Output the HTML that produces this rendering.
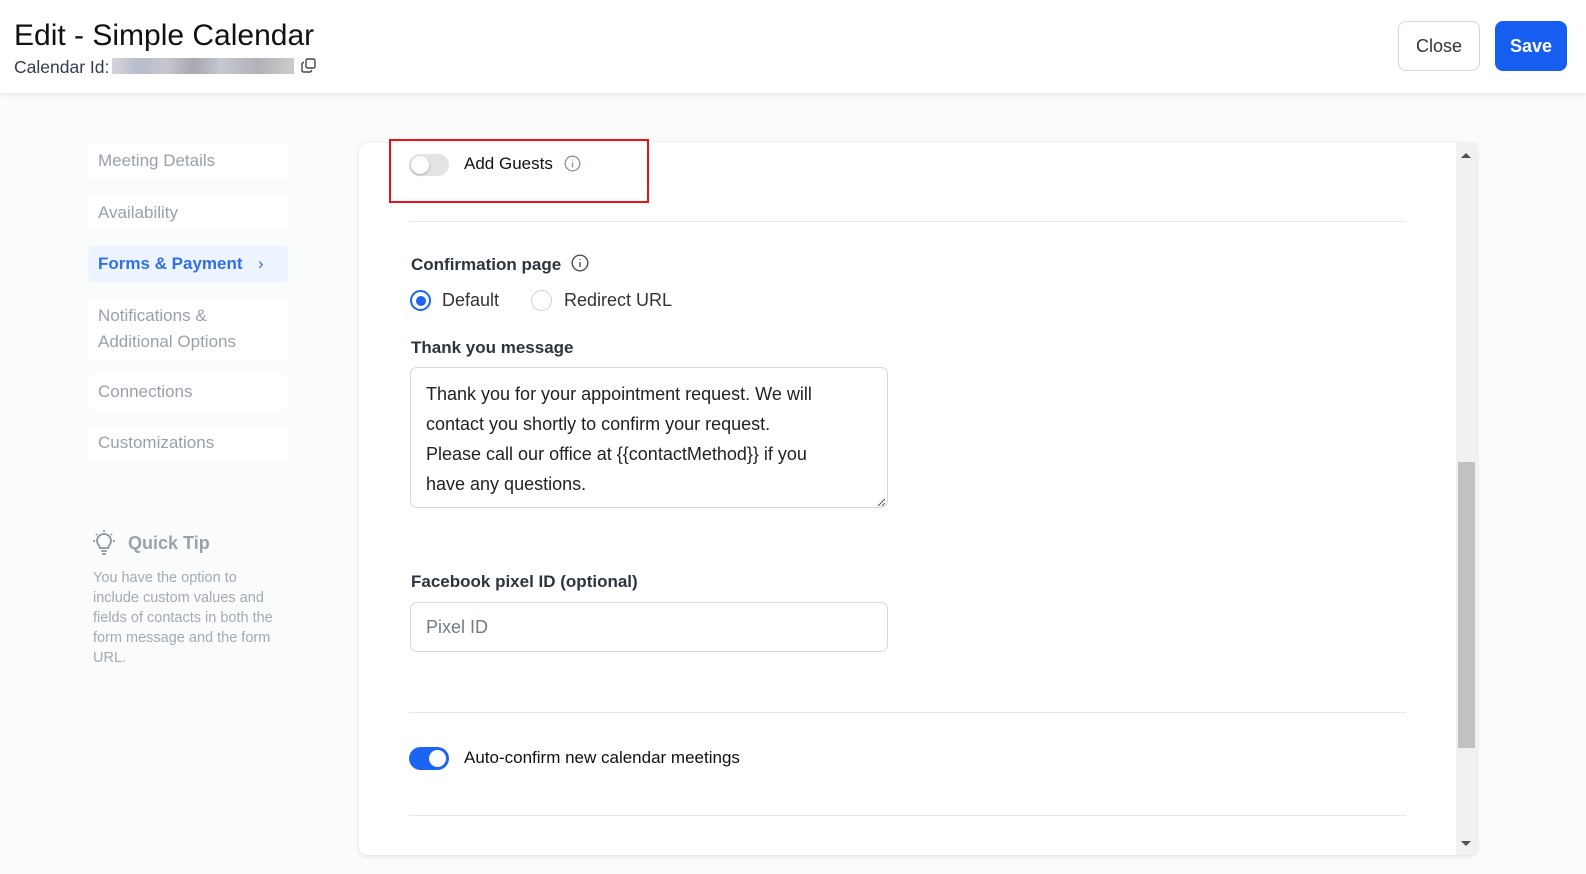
<!DOCTYPE html>
<html><head><meta charset="utf-8"><style>
*{box-sizing:border-box;margin:0;padding:0}
body{width:1586px;height:874px;background:#fafbfb;font-family:"Liberation Sans",sans-serif;position:relative;overflow:hidden;color:#111}
.a{position:absolute;white-space:nowrap}
.hdr{position:absolute;left:0;top:0;width:1586px;height:93px;background:#fff;box-shadow:0 2px 4px rgba(0,0,0,.08)}
.nav{position:absolute;left:88px;width:200px;background:#fff;border-radius:5px;color:#98a0ad;font-size:17px;padding-left:10px;display:flex;align-items:center}
.card{position:absolute;left:359px;top:143px;width:1118px;height:712px;background:#fff;border-radius:8px;box-shadow:0 1px 4px rgba(0,0,0,.12)}
.div{position:absolute;left:409px;width:997px;height:1px;background:#e8e8e8}
.lbl{font-size:17px;font-weight:bold;color:#2c3440}
</style></head><body>
<div class="hdr">
 <div class="a" style="left:14px;top:19px;font-size:30px;color:#111">Edit - Simple Calendar</div>
 <div class="a" style="left:14px;top:57px;font-size:17.5px;color:#333c4e">Calendar Id:</div>
 <div class="a" style="left:112px;top:58px;width:182px;height:16px;background:linear-gradient(90deg,#d8d4d8,#b6bccb 15%,#c8c6cc 30%,#a8a8b0 45%,#c4c8d0 60%,#b4b0b8 80%,#ccc 100%)"></div>
 <svg class="a" style="left:301px;top:58px" width="15" height="15" viewBox="0 0 15 15" fill="none" stroke="#444" stroke-width="1.4"><rect x="5" y="1" width="9" height="9" rx="1.5"/><path d="M3 4.5H2.5A1.5 1.5 0 0 0 1 6v6.5A1.5 1.5 0 0 0 2.5 14H9a1.5 1.5 0 0 0 1.5-1.5V12"/></svg>
 <div class="a" style="left:1398px;top:21px;width:82px;height:50px;border:1px solid #d3d6de;border-radius:8px;font-size:18px;color:#333;display:flex;align-items:center;justify-content:center">Close</div>
 <div class="a" style="left:1495px;top:21px;width:72px;height:50px;background:#155eef;border-radius:8px;font-size:18px;font-weight:bold;color:#fff;display:flex;align-items:center;justify-content:center">Save</div>
</div>

<div class="nav" style="top:143px;height:36px">Meeting Details</div>
<div class="nav" style="top:194px;height:37px">Availability</div>
<div class="nav" style="top:246px;height:36px;background:#eef4ff;color:#2f6fe8;font-weight:bold">Forms &amp; Payment<span style="position:absolute;left:170px;font-weight:normal">&#8250;</span></div>
<div class="nav" style="top:297px;height:63px;line-height:26px;white-space:normal">Notifications &amp;<br>Additional Options</div>
<div class="nav" style="top:374px;height:36px">Connections</div>
<div class="nav" style="top:425px;height:36px">Customizations</div>

<svg class="a" style="left:91px;top:530px" width="26" height="26" viewBox="0 0 26 26" fill="none" stroke="#8c94a3" stroke-width="1.8"><path d="M9 18c0-2-3-3.5-3-7a7 7 0 0 1 14 0c0 3.5-3 5-3 7z"/><path d="M10 21h6M11 24h4"/><path d="M13 0v2M2 11h2M22 11h2M5 4l1 1M21 4l-1 1"/></svg>
<div class="a" style="left:128px;top:533px;font-size:18px;font-weight:bold;color:#9aa1ae">Quick Tip</div>
<div class="a" style="left:93px;top:568px;font-size:14.5px;line-height:20px;color:#a3a9b5">You have the option to<br>include custom values and<br>fields of contacts in both the<br>form message and the form<br>URL.</div>

<div class="card"></div>
<div class="a" style="left:1456px;top:143px;width:21px;height:712px;background:#f1f1f1"></div>
<div class="a" style="left:1458px;top:462px;width:17px;height:286px;background:#c1c1c1"></div>
<div class="a" style="left:1461px;top:153px;width:0;height:0;border-left:5px solid transparent;border-right:5px solid transparent;border-bottom:5px solid #505050"></div>
<div class="a" style="left:1461px;top:841px;width:0;height:0;border-left:5px solid transparent;border-right:5px solid transparent;border-top:5px solid #505050"></div>

<div class="a" style="left:389px;top:139px;width:260px;height:64px;border:2px solid #e8121b"></div>
<div class="a" style="left:409px;top:154px;width:40px;height:22px;border-radius:11px;background:#e4e4e4"><div style="position:absolute;left:2px;top:2px;width:18px;height:18px;border-radius:50%;background:#fff;box-shadow:0 1px 2px rgba(0,0,0,.3)"></div></div>
<div class="a" style="left:464px;top:154px;font-size:17px;color:#111">Add Guests</div>
<svg class="a" style="left:564px;top:155px" width="17" height="17" viewBox="0 0 17 17" fill="none" stroke="#8a92a0" stroke-width="1.3"><circle cx="8.5" cy="8.5" r="7.3"/><path d="M8.5 7.5v5M8.5 4.6v.9"/></svg>
<div class="div" style="top:221px"></div>

<div class="a lbl" style="left:411px;top:255px;font-weight:600">Confirmation page</div>
<svg class="a" style="left:571px;top:254px" width="18" height="18" viewBox="0 0 18 18" fill="none" stroke="#4a5261" stroke-width="1.4"><circle cx="9" cy="9" r="7.8"/><path d="M9 8v5M9 5v1"/></svg>
<div class="a" style="left:410px;top:290px;width:21px;height:21px;border-radius:50%;border:2px solid #1c64f2;background:#fff"><div style="position:absolute;left:3.5px;top:3.5px;width:10px;height:10px;border-radius:50%;background:#1c64f2"></div></div>
<div class="a" style="left:442px;top:290px;font-size:18px;color:#333">Default</div>
<div class="a" style="left:531px;top:290px;width:21px;height:21px;border-radius:50%;border:1px solid #ccd0d6"></div>
<div class="a" style="left:564px;top:290px;font-size:18px;color:#333">Redirect URL</div>

<div class="a lbl" style="left:411px;top:338px">Thank you message</div>
<div class="a" style="left:410px;top:367px;width:478px;height:141px;border:1px solid #d5d9de;border-radius:7px"></div>
<div class="a" style="left:426px;top:379px;font-size:18px;line-height:30px;color:#222">Thank you for your appointment request. We will<br>contact you shortly to confirm your request.<br>Please call our office at {{contactMethod}} if you<br>have any questions.</div>
<svg class="a" style="left:877px;top:498px" width="9" height="9" viewBox="0 0 9 9" stroke="#555" stroke-width="1"><path d="M1 8L8 1M5 8L8 5"/></svg>

<div class="a lbl" style="left:411px;top:572px">Facebook pixel ID (optional)</div>
<div class="a" style="left:410px;top:602px;width:478px;height:50px;border:1px solid #d5d9de;border-radius:7px"></div>
<div class="a" style="left:426px;top:617px;font-size:18px;color:#737b87">Pixel ID</div>
<div class="div" style="top:712px"></div>

<div class="a" style="left:409px;top:747px;width:40px;height:23px;border-radius:12px;background:#1c64f2"><div style="position:absolute;right:3px;top:3px;width:17px;height:17px;border-radius:50%;background:#fff"></div></div>
<div class="a" style="left:464px;top:748px;font-size:17px;color:#111">Auto-confirm new calendar meetings</div>
<div class="div" style="top:815px"></div>
</body></html>
